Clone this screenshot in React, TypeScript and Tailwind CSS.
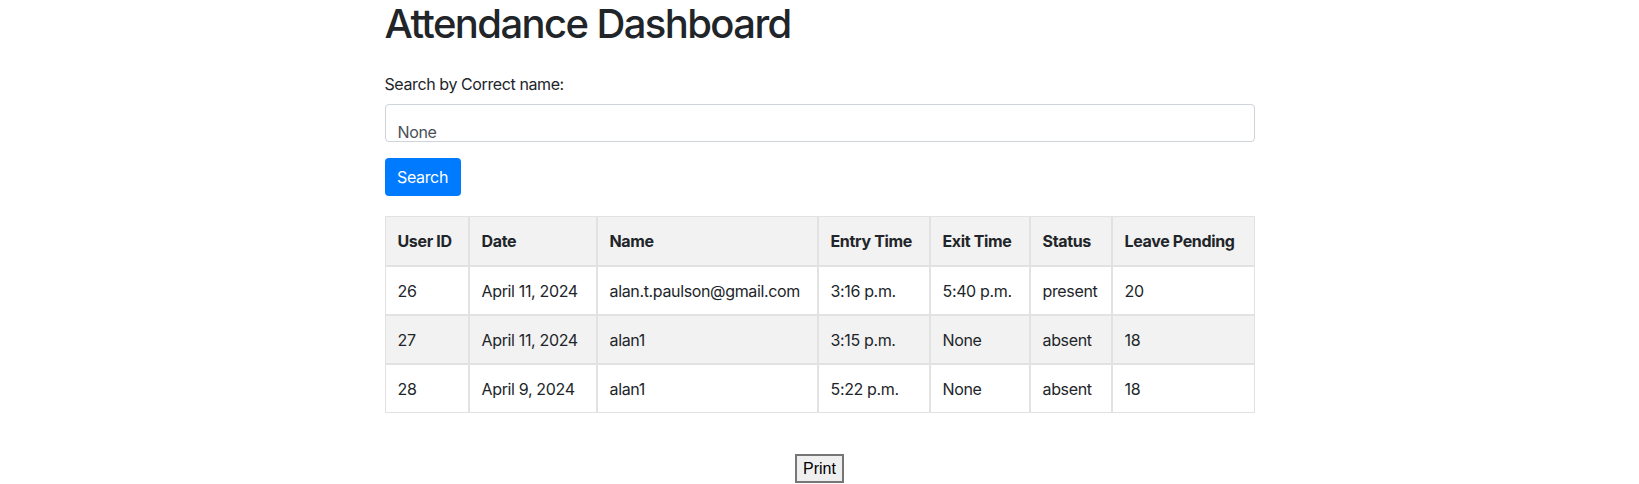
import React from 'react';

type Row = {
  id: number;
  date: string;
  name: string;
  entry: string;
  exit: string;
  status: string;
  leave: number;
};

const rows: Row[] = [
  { id: 26, date: 'April 11, 2024', name: 'alan.t.paulson@gmail.com', entry: '3:16 p.m.', exit: '5:40 p.m.', status: 'present', leave: 20 },
  { id: 27, date: 'April 11, 2024', name: 'alan1', entry: '3:15 p.m.', exit: 'None', status: 'absent', leave: 18 },
  { id: 28, date: 'April 9, 2024', name: 'alan1', entry: '5:22 p.m.', exit: 'None', status: 'absent', leave: 18 },
];

const font = { fontFamily: 'Inter, "Liberation Sans", sans-serif' };

const App = () => {
  return (
    <div className="min-h-screen bg-white text-[#212529] tracking-[-0.35px]" style={font}>
      <div className="mx-auto w-[900px] px-[15px]">
        {/* 제목 */}
        <h1 className="text-[40px] font-medium leading-[48px] tracking-[-1.6px] m-0">Attendance Dashboard</h1>

        {/* 검색 폼 */}
        <div className="mt-[24px]">
          <label className="block text-[16px] leading-6 mb-2 tracking-[-0.4px]">Search by Correct name:</label>
          <div className="h-[38px] w-full overflow-hidden rounded-[4px] border border-[#ced4da] px-3 pt-[15px] text-[16px] leading-6 text-[#495057]">
            None
          </div>
          <button className="mt-4 h-[38px] w-[76px] rounded-[4px] bg-[#007bff] text-[16px] leading-6 text-white">
            Search
          </button>
        </div>

        {/* 출석 테이블 */}
        <table className="mt-5 w-full table-fixed border-separate border-spacing-0 text-[16px] leading-6">
          <thead>
            <tr className="bg-[#f2f2f2]">
              <th className="w-[84px] border border-[#e2e2e2] px-3 py-3 text-left font-bold">User ID</th>
              <th className="w-[128px] border border-[#e2e2e2] px-3 py-3 text-left font-bold">Date</th>
              <th className="w-[221px] border border-[#e2e2e2] px-3 py-3 text-left font-bold">Name</th>
              <th className="w-[112px] border border-[#e2e2e2] px-3 py-3 text-left font-bold">Entry Time</th>
              <th className="w-[100px] border border-[#e2e2e2] px-3 py-3 text-left font-bold">Exit Time</th>
              <th className="w-[82px] border border-[#e2e2e2] px-3 py-3 text-left font-bold">Status</th>
              <th className="border border-[#e2e2e2] px-3 py-3 text-left font-bold">Leave Pending</th>
            </tr>
          </thead>
          <tbody>
            {rows.map((r, idx) => (
              <tr key={r.id} className={idx % 2 === 1 ? 'bg-[#f2f2f2]' : 'bg-white'}>
                <td className="border border-[#e2e2e2] px-3 pt-3 pb-[11px]">{r.id}</td>
                <td className="border border-[#e2e2e2] px-3 pt-3 pb-[11px]">{r.date}</td>
                <td className="border border-[#e2e2e2] px-3 pt-3 pb-[11px]">{r.name}</td>
                <td className="border border-[#e2e2e2] px-3 pt-3 pb-[11px]">{r.entry}</td>
                <td className="border border-[#e2e2e2] px-3 pt-3 pb-[11px]">{r.exit}</td>
                <td className="border border-[#e2e2e2] px-3 pt-3 pb-[11px]">{r.status}</td>
                <td className="border border-[#e2e2e2] px-3 pt-3 pb-[11px]">{r.leave}</td>
              </tr>
            ))}
          </tbody>
        </table>

        {/* 인쇄 버튼 */}
        <div className="mt-[41px] flex justify-center">
          <button
            className="h-[29px] border-2 border-[#767676] bg-[#efefef] px-[6px] text-[16px] leading-5 tracking-normal text-black"
            style={{ fontFamily: '"Liberation Sans", Arial, sans-serif' }}
          >
            Print
          </button>
        </div>
      </div>
    </div>
  );
};

export default App;
